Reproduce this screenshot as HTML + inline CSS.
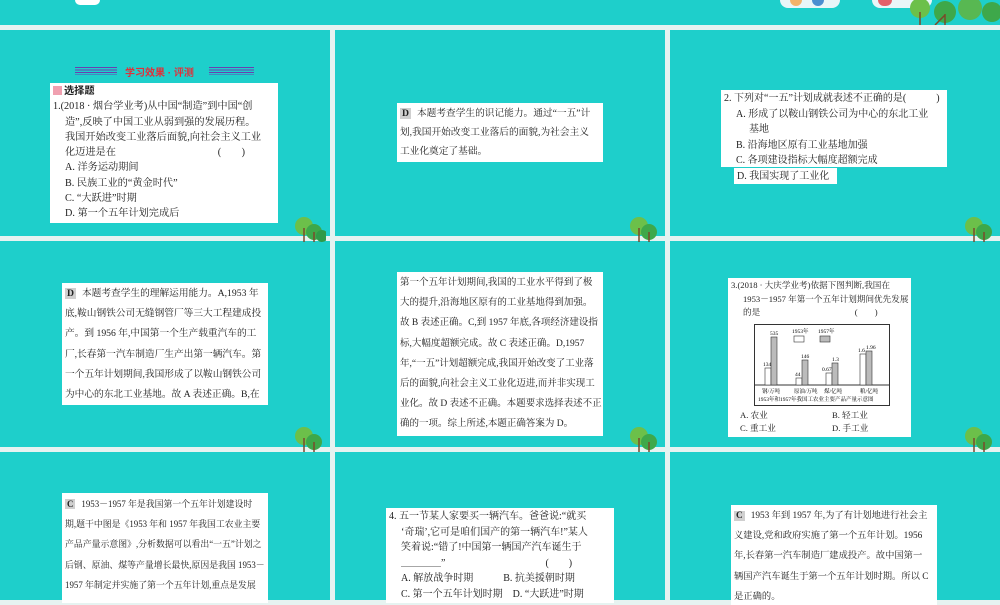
<!DOCTYPE html>
<html><head><meta charset="utf-8"><style>
*{margin:0;padding:0;box-sizing:border-box}
body{width:1000px;height:600px;background:#e6f3f1;position:relative;overflow:hidden;font-family:"Liberation Serif","Noto Serif CJK SC",serif;color:#222}
.s{position:absolute;background:#1ecfcb;overflow:hidden}
.b{position:absolute;background:#fff;font-size:10px;line-height:15.5px;padding:1px 3px;white-space:nowrap;overflow:hidden}
.b p{margin:0}
.i{padding-left:12px}
.ex{line-height:20.5px;font-size:9.7px}
.tag{background:#cfcfcf;font-weight:bold;padding:0 2px;margin-right:6px}
.tree{position:absolute;width:34px;height:30px}
</style></head><body>
<div class="s" style="left:0;top:0;width:1000px;height:25px"></div>
<div style="position:absolute;left:75px;top:0;width:25px;height:5px;background:#fff;border-radius:0 0 12px 12px"></div>
<div style="position:absolute;left:780px;top:0;width:60px;height:8px;background:#e8f6f8;border-radius:0 0 30px 30px"></div>
<div style="position:absolute;left:790px;top:0;width:12px;height:6px;background:#f2b36a;border-radius:0 0 6px 6px"></div>
<div style="position:absolute;left:812px;top:0;width:12px;height:6px;background:#4a8fd0;border-radius:0 0 6px 6px"></div>
<div style="position:absolute;left:872px;top:0;width:60px;height:8px;background:#e8f6f8;border-radius:0 0 30px 30px"></div>
<div style="position:absolute;left:878px;top:0;width:14px;height:6px;background:#e4606a;border-radius:0 0 6px 6px"></div>
<svg style="position:absolute;left:890px;top:0" width="110" height="25" viewBox="0 0 110 25"><circle cx="30" cy="8" r="10" fill="#6cc04a"/><circle cx="55" cy="12" r="11" fill="#3ea84a"/><circle cx="80" cy="8" r="12" fill="#58b852"/><circle cx="102" cy="12" r="10" fill="#3ea84a"/><path d="M30 25V12M55 25V14M45 25l10-10" stroke="#7a4a2a" stroke-width="1.5"/></svg>

<div class="s" style="left:0;top:30px;width:330px;height:206px"></div>
<div class="s" style="left:335px;top:30px;width:330px;height:206px"></div>
<div class="s" style="left:670px;top:30px;width:330px;height:206px"></div>
<div class="s" style="left:0;top:241px;width:330px;height:206px"></div>
<div class="s" style="left:335px;top:241px;width:330px;height:206px"></div>
<div class="s" style="left:670px;top:241px;width:330px;height:206px"></div>
<div class="s" style="left:0;top:452px;width:330px;height:148px"></div>
<div class="s" style="left:335px;top:452px;width:330px;height:148px"></div>
<div class="s" style="left:670px;top:452px;width:330px;height:148px"></div>

<svg class="tree" style="left:292px;top:212px" viewBox="0 0 34 30"><circle cx="12" cy="14" r="9" fill="#6cc04a"/><circle cx="22" cy="20" r="8" fill="#3ea84a"/><circle cx="30" cy="24" r="6" fill="#2f9a48"/><path d="M12 30V16M22 30V20" stroke="#7a4a2a" stroke-width="1.5"/></svg>
<svg class="tree" style="left:627px;top:212px" viewBox="0 0 34 30"><circle cx="12" cy="14" r="9" fill="#6cc04a"/><circle cx="22" cy="20" r="8" fill="#3ea84a"/><path d="M12 30V16M22 30V20" stroke="#7a4a2a" stroke-width="1.5"/></svg>
<svg class="tree" style="left:962px;top:212px" viewBox="0 0 34 30"><circle cx="12" cy="14" r="9" fill="#6cc04a"/><circle cx="22" cy="20" r="8" fill="#3ea84a"/><path d="M12 30V16M22 30V20" stroke="#7a4a2a" stroke-width="1.5"/></svg>
<svg class="tree" style="left:292px;top:422px" viewBox="0 0 34 30"><circle cx="12" cy="14" r="9" fill="#6cc04a"/><circle cx="22" cy="20" r="8" fill="#3ea84a"/><path d="M12 30V16M22 30V20" stroke="#7a4a2a" stroke-width="1.5"/></svg>
<svg class="tree" style="left:627px;top:422px" viewBox="0 0 34 30"><circle cx="12" cy="14" r="9" fill="#6cc04a"/><circle cx="22" cy="20" r="8" fill="#3ea84a"/><path d="M12 30V16M22 30V20" stroke="#7a4a2a" stroke-width="1.5"/></svg>
<svg class="tree" style="left:962px;top:422px" viewBox="0 0 34 30"><circle cx="12" cy="14" r="9" fill="#6cc04a"/><circle cx="22" cy="20" r="8" fill="#3ea84a"/><path d="M12 30V16M22 30V20" stroke="#7a4a2a" stroke-width="1.5"/></svg>

<div style="position:absolute;left:75px;top:67px;width:42px;height:8px;background:repeating-linear-gradient(#6a3fb0 0 1px,transparent 1px 2.5px)"></div>
<div style="position:absolute;left:125px;top:64px;font:bold 10px 'Liberation Sans','Noto Sans CJK SC',sans-serif;color:#e0303a">学习效果 · 评测</div>
<div style="position:absolute;left:209px;top:67px;width:45px;height:8px;background:repeating-linear-gradient(#6a3fb0 0 1px,transparent 1px 2.5px)"></div>
<div class="b" style="left:50px;top:83px;width:228px;height:140px;line-height:15.3px;font-size:10.2px">
<p style="font-weight:bold;font-family:'Liberation Sans','Noto Sans CJK SC',sans-serif"><span style="display:inline-block;width:9px;height:9px;background:#f0a0b0;vertical-align:-1px;margin-right:2px"></span>选择题</p>
<p>1.(2018 · 烟台学业考)从中国“制造”到中国“创</p>
<p class="i">造”,反映了中国工业从弱到强的发展历程。</p>
<p class="i">我国开始改变工业落后面貌,向社会主义工业</p>
<p class="i">化迈进是在　　　　　　　　　　(　　)</p>
<p class="i">A. 洋务运动期间</p>
<p class="i">B. 民族工业的“黄金时代”</p>
<p class="i">C. “大跃进”时期</p>
<p class="i">D. 第一个五年计划完成后</p>
</div>

<div class="b ex" style="left:397px;top:103px;width:206px;height:59px;line-height:19px;padding-top:1px">
<p><span class="tag">D</span>本题考查学生的识记能力。通过“一五”计</p>
<p>划,我国开始改变工业落后的面貌,为社会主义</p>
<p>工业化奠定了基础。</p>
</div>

<div class="b" style="left:721px;top:90px;width:226px;height:77px">
<p>2. 下列对“一五”计划成就表述不正确的是(　　　)</p>
<p class="i">A. 形成了以鞍山钢铁公司为中心的东北工业</p>
<p style="padding-left:25px">基地</p>
<p class="i">B. 沿海地区原有工业基地加强</p>
<p class="i">C. 各项建设指标大幅度超额完成</p>
</div>
<div class="b" style="left:734px;top:168px;width:103px;height:16px;line-height:15px">D. 我国实现了工业化</div>

<div class="b ex" style="left:62px;top:283px;width:206px;height:122px;line-height:20.2px">
<p><span class="tag">D</span>本题考查学生的理解运用能力。A,1953 年</p>
<p>底,鞍山钢铁公司无缝钢管厂等三大工程建成投</p>
<p>产。到 1956 年,中国第一个生产载重汽车的工</p>
<p>厂,长春第一汽车制造厂生产出第一辆汽车。第</p>
<p>一个五年计划期间,我国形成了以鞍山钢铁公司</p>
<p>为中心的东北工业基地。故 A 表述正确。B,在</p>
</div>

<div class="b ex" style="left:397px;top:272px;width:206px;height:164px;line-height:20.2px;font-size:9.5px">
<p>第一个五年计划期间,我国的工业水平得到了极</p>
<p>大的提升,沿海地区原有的工业基地得到加强。</p>
<p>故 B 表述正确。C,到 1957 年底,各项经济建设指</p>
<p>标,大幅度超额完成。故 C 表述正确。D,1957</p>
<p>年,“一五”计划超额完成,我国开始改变了工业落</p>
<p>后的面貌,向社会主义工业化迈进,而并非实现工</p>
<p>业化。故 D 表述不正确。本题要求选择表述不正</p>
<p>确的一项。综上所述,本题正确答案为 D。</p>
</div>

<div class="b" style="left:728px;top:278px;width:183px;height:159px;font-size:8.6px;line-height:13.5px">
<p>3.(2018 · 大庆学业考)依据下图判断,我国在</p>
<p class="i">1953－1957 年第一个五年计划期间优先发展</p>
<p class="i">的是　　　　　　　　　　　(　　)</p>
<svg style="position:absolute;left:26px;top:46px" width="136" height="82" viewBox="0 0 136 82" font-family="Liberation Serif,Noto Serif CJK SC,serif" font-size="5.5">
<rect x="0.5" y="0.5" width="135" height="81" fill="#fff" stroke="#333"/>
<line x1="0" y1="61" x2="136" y2="61" stroke="#333"/>
<text x="38" y="9">1953年</text><rect x="40" y="12" width="10" height="6" fill="#fff" stroke="#333" stroke-width=".6"/>
<text x="64" y="9">1957年</text><rect x="66" y="12" width="10" height="6" fill="#bbb" stroke="#333" stroke-width=".6"/>
<rect x="11" y="44" width="6" height="17" fill="#fff" stroke="#333" stroke-width=".6"/><rect x="17" y="13" width="6" height="48" fill="#bbb" stroke="#333" stroke-width=".6"/>
<text x="9" y="42">134</text><text x="16" y="11">535</text>
<rect x="42" y="54" width="6" height="7" fill="#fff" stroke="#333" stroke-width=".6"/><rect x="48" y="36" width="6" height="25" fill="#bbb" stroke="#333" stroke-width=".6"/>
<text x="41" y="52">44</text><text x="47" y="34">146</text>
<rect x="72" y="49" width="6" height="12" fill="#fff" stroke="#333" stroke-width=".6"/><rect x="78" y="39" width="6" height="22" fill="#bbb" stroke="#333" stroke-width=".6"/>
<text x="68" y="47">0.67</text><text x="78" y="37">1.3</text>
<rect x="106" y="30" width="6" height="31" fill="#fff" stroke="#333" stroke-width=".6"/><rect x="112" y="27" width="6" height="34" fill="#bbb" stroke="#333" stroke-width=".6"/>
<text x="104" y="28">1.6</text><text x="112" y="25">1.96</text>
<text x="8" y="69">钢/万吨</text><text x="40" y="69">原油/万吨</text><text x="70" y="69">煤/亿吨</text><text x="106" y="69">粮/亿吨</text>
<text x="4" y="77">1953年和1957年我国工农业主要产品产量示意图</text>
</svg>
<p style="position:absolute;left:12px;top:131px">A. 农业</p>
<p style="position:absolute;left:104px;top:131px">B. 轻工业</p>
<p style="position:absolute;left:12px;top:144px">C. 重工业</p>
<p style="position:absolute;left:104px;top:144px">D. 手工业</p>
</div>

<div class="b ex" style="left:62px;top:493px;width:206px;height:110px;font-size:8.9px;line-height:20.2px">
<p><span class="tag">C</span>1953－1957 年是我国第一个五年计划建设时</p>
<p>期,题干中图是《1953 年和 1957 年我国工农业主要</p>
<p>产品产量示意图》,分析数据可以看出“一五”计划之</p>
<p>后钢、原油、煤等产量增长最快,原因是我国 1953－</p>
<p>1957 年制定并实施了第一个五年计划,重点是发展</p>
</div>

<div class="b" style="left:386px;top:508px;width:228px;height:95px;line-height:15.5px;font-size:10px">
<p>4. 五一节某人家要买一辆汽车。爸爸说:“就买</p>
<p class="i">‘奇瑞’,它可是咱们国产的第一辆汽车!”某人</p>
<p class="i">笑着说:“错了!中国第一辆国产汽车诞生于</p>
<p class="i">＿＿＿＿”　　　　　　　　　　(　　)</p>
<p class="i">A. 解放战争时期　　　B. 抗美援朝时期</p>
<p class="i">C. 第一个五年计划时期　D. “大跃进”时期</p>
</div>

<div class="b ex" style="left:731px;top:505px;width:206px;height:100px;font-size:9.3px;line-height:20.2px">
<p><span class="tag">C</span>1953 年到 1957 年,为了有计划地进行社会主</p>
<p>义建设,党和政府实施了第一个五年计划。1956</p>
<p>年,长春第一汽车制造厂建成投产。故中国第一</p>
<p>辆国产汽车诞生于第一个五年计划时期。所以 C</p>
<p>是正确的。</p>
</div>
</body></html>
